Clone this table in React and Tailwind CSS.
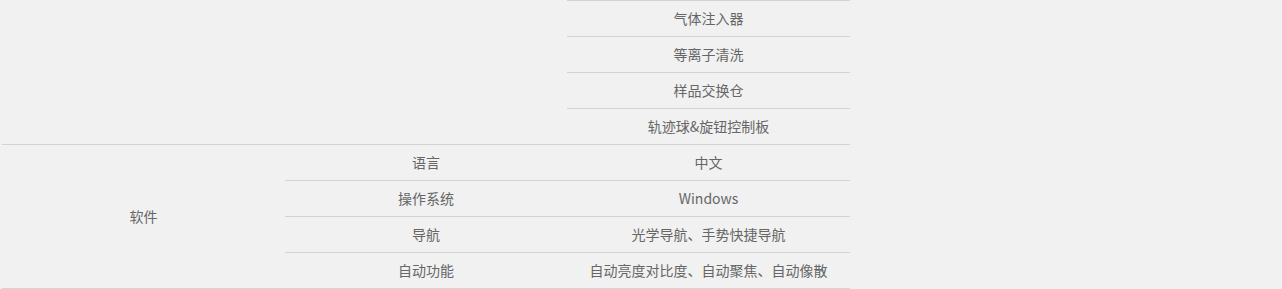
import React from "react";

const cell = "flex items-center justify-center border-b border-[#d2d2d2] text-[14px] text-[#666]";

const topRows = ["气体注入器", "等离子清洗", "样品交换仓", "轨迹球&旋钮控制板"];

const software = [
  ["语言", "中文"],
  ["操作系统", "Windows"],
  ["导航", "光学导航、手势快捷导航"],
  ["自动功能", "自动亮度对比度、自动聚焦、自动像散"],
];

export default function App() {
  return (
    <div
      className="w-[1282px] h-[289px] bg-[#f1f1f1] pl-[2px]"
      style={{ fontFamily: '"Noto Sans CJK SC", "Noto Sans", sans-serif' }}
    >
      <div className="grid w-[848px] grid-cols-[283px_282px_283px] grid-rows-[1px_repeat(8,36px)]">
        {/* merged cells left over from the rows above */}
        <div className="col-start-1 col-span-2 row-start-1 row-span-5 border-b border-[#d2d2d2]" />
        <div className="col-start-3 row-start-1 bg-[#d2d2d2]" />
        {topRows.map((t, i) => (
          <div key={t} className={`${cell} col-start-3`} style={{ gridRowStart: i + 2 }}>
            {t}
          </div>
        ))}

        {/* ── 软件 ── */}
        <div className={`${cell} col-start-1 row-start-6 row-span-4`}>软件</div>
        {software.map(([k, v], i) => (
          <React.Fragment key={k}>
            <div className={`${cell} col-start-2`} style={{ gridRowStart: i + 6 }}>
              {k}
            </div>
            <div className={`${cell} col-start-3`} style={{ gridRowStart: i + 6 }}>
              {v}
            </div>
          </React.Fragment>
        ))}
      </div>
    </div>
  );
}
